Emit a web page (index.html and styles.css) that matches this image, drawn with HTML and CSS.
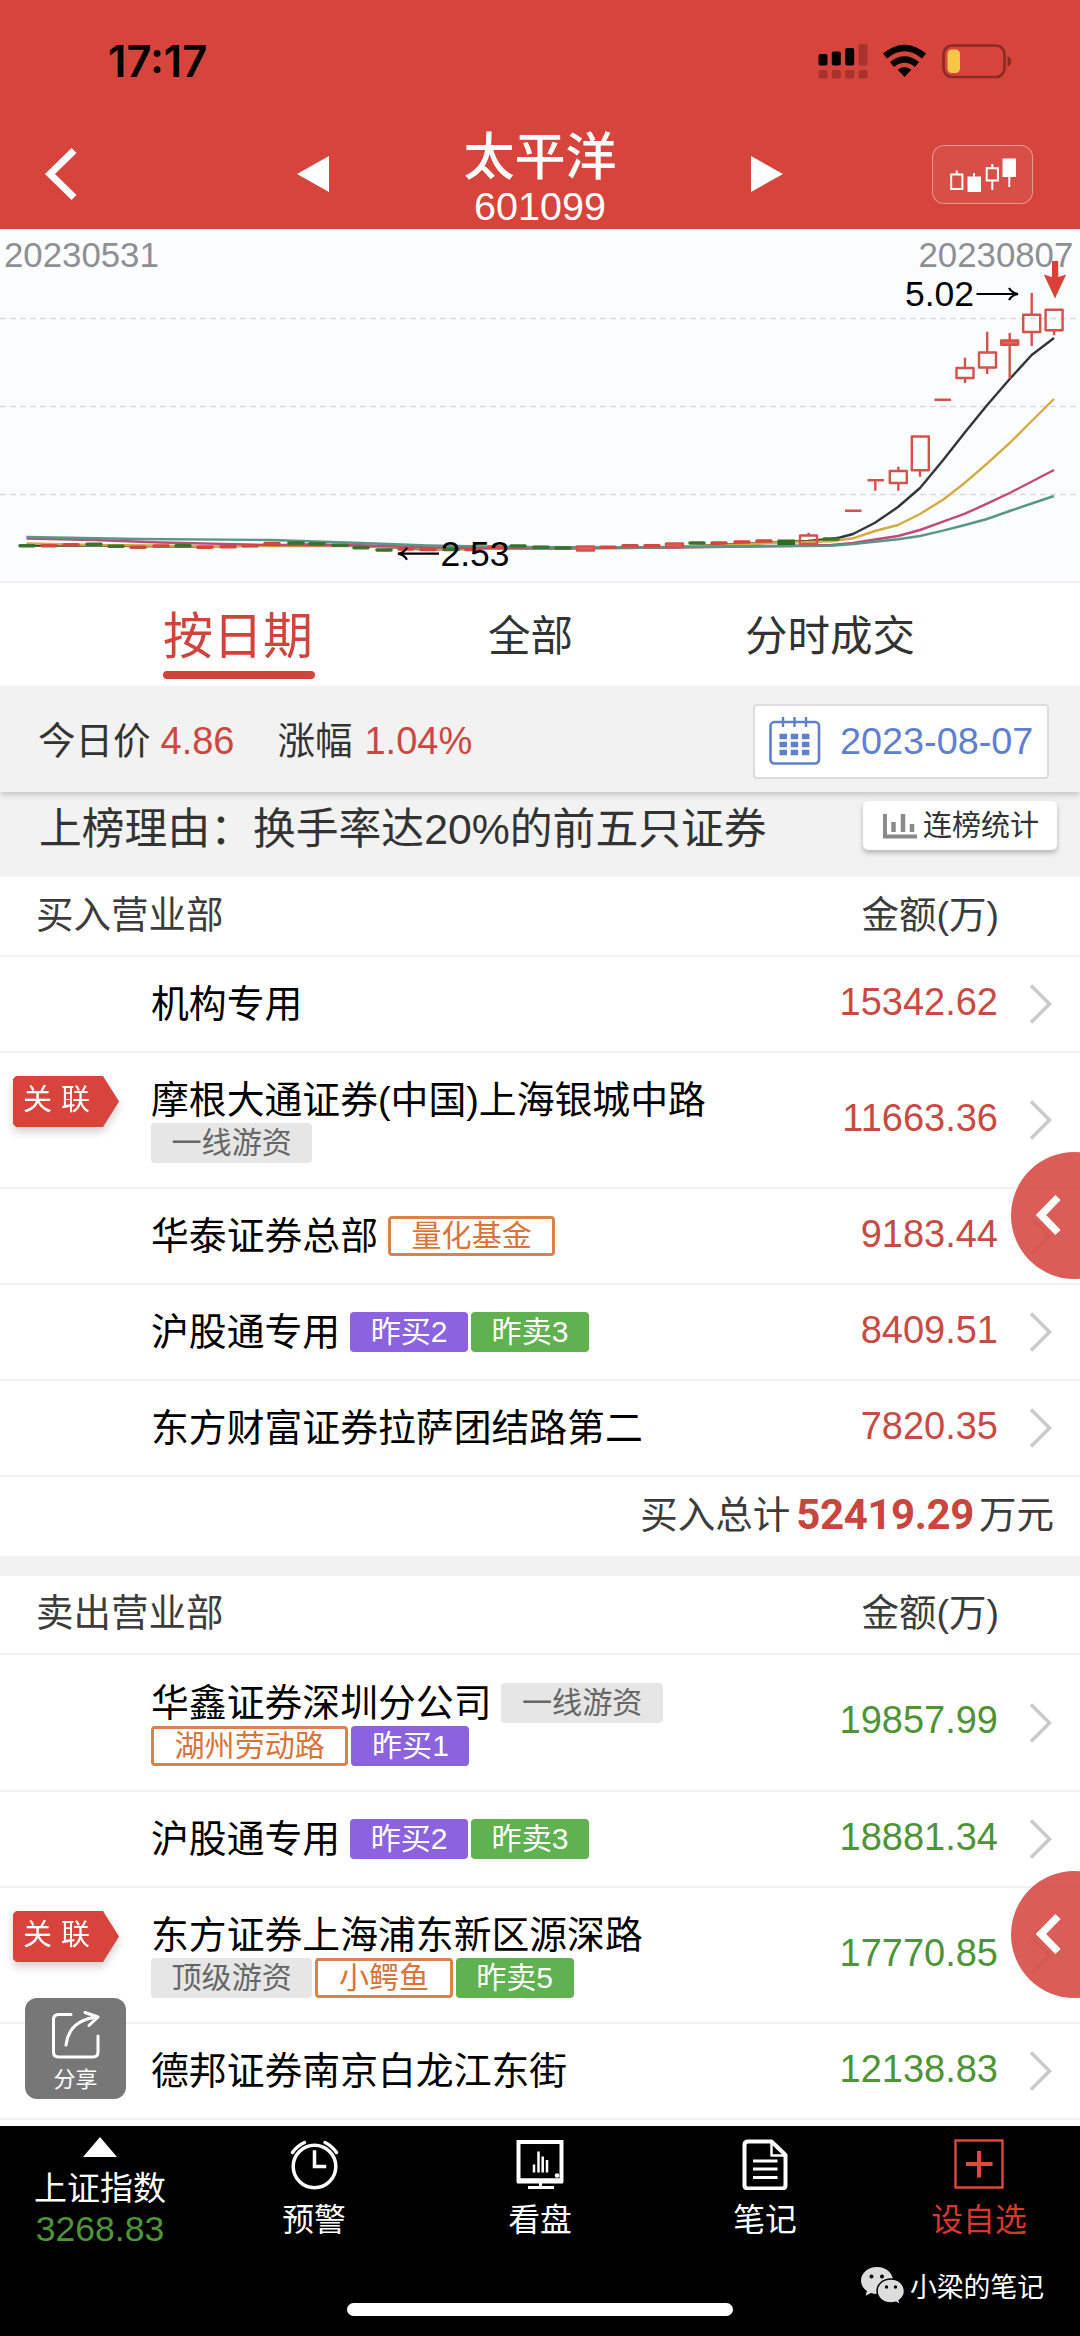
FILE: index.html
```html
<!DOCTYPE html>
<html lang="zh-CN">
<head>
<meta charset="utf-8">
<title>太平洋 601099</title>
<link rel="stylesheet" href="styles.css">
</head>
<body>
<div class="screen">
  <header class="header">
    <div class="status">
      <span class="clock">17:17</span>
      <svg class="status-icons" width="194" height="36" viewBox="818 43 194 36">
        <g fill="#000">
          <rect x="818.5" y="54" width="9" height="11.5" rx="2"/>
          <rect x="831.8" y="51.5" width="9" height="14" rx="2"/>
          <rect x="845.2" y="48" width="9" height="17.5" rx="2"/>
        </g>
        <g fill="#a8332e">
          <rect x="858.6" y="44" width="9" height="21.5" rx="2"/>
          <rect x="818.5" y="70" width="9" height="8.5" rx="2"/>
          <rect x="831.8" y="70" width="9" height="8.5" rx="2"/>
          <rect x="845.2" y="70" width="9" height="8.5" rx="2"/>
          <rect x="858.6" y="70" width="9" height="8.5" rx="2"/>
        </g>
        <g fill="none" stroke="#000" stroke-width="6.500">
          <path d="M885 56Q904.500 40 924 56"/>
          <path d="M892 64.500Q904.500 54.500 917 64.500"/>
        </g>
        <path d="M904.500 77l-6.800-7.200Q904.500 64 911.300 69.800z"/>
        <rect x="943.500" y="45.500" width="61" height="31.500" rx="8.500" fill="none" stroke="#8e2a25" stroke-width="2.600"/>
        <rect x="947.500" y="49.500" width="12.500" height="23.500" rx="4.500" fill="#f8c845"/>
        <path d="M1007.500 56q3.800 1.500 3.800 5.300t-3.800 5.300z" fill="#8e2a25"/>
      </svg>
    </div>
    <div class="titlebar">
      <svg class="back" width="36" height="54" viewBox="0 0 36 54"><path d="M32 3.500L8 27l24 23.500" fill="none" stroke="#fff" stroke-width="7"/></svg>
      <svg class="prev" width="34" height="38" viewBox="0 0 34 38"><path d="M33 1v36L1 19z" fill="#fff"/></svg>
      <div class="stock"><h1>太平洋</h1><p>601099</p></div>
      <svg class="next" width="34" height="38" viewBox="0 0 34 38"><path d="M1 1v36l32-18z" fill="#fff"/></svg>
      <div class="kline-btn">
        <svg width="68" height="36" viewBox="949 155 68 36">
          <path d="M951.200 172.500h11.200v14.500h-11.200zM956.800 168.500v4M986.700 166.200h11.200v12.300h-11.200zM992.300 162v4M992.300 178.500v9.500M974 171v4M1009.300 174v11" fill="none" stroke="#fff" stroke-width="2"/>
          <path d="M967.500 174.500h13.500V190h-13.500zM1002.500 156.500h13.500V175h-13.500z" fill="#fff"/>
        </svg>
      </div>
    </div>
  </header>

  <svg class="chart" width="1080" height="354" viewBox="0 229 1080 354">
    <path d="M0 318.500H1080M0 406.500H1080M0 494.500H1080" stroke="#d9d9dd" stroke-width="1.500" stroke-dasharray="6 4"/>
    <path d="M0 582.500H1080" stroke="#e8eaee" stroke-width="2"/>
    <g fill="#8e8f92" font-size="34.800">
      <text x="4" y="267">20230531</text>
      <text x="918.500" y="267">20230807</text>
    </g>
    <g fill="none" stroke-width="2.400" stroke-linejoin="round">
      <path stroke="#34343b" d="M26.500 545.500L94 545.500 183 546.500 272 545.500 317 544.500 384 547 428 549.500 518 548 585 548 675 547 742 544 786 542 808 541 831 539 840 537.500 853 534 875 522.700 898 507 920 488 943 460.300 965 432.300 987 405.300 1009.700 379 1031.700 355 1054 338"/>
      <path stroke="#d0ac43" d="M26.500 543.500L94 545 183 546 272 546 361 546 450 549.500 540 548 630 548 720 545.500 764 543.300 831 541.300 853 538.300 875 531 898 525 920 514 943 499.700 965 482.700 987 463.700 1009.700 443 1031.700 421 1054 399"/>
      <path stroke="#c04a7a" d="M26.500 538.500L94 540 161 542.500 272 545 361 545.300 450 548 540 548.500 675 547.500 786 546 831 545 853 543 875 539.500 898 536 920 530 943 521.700 965 513.700 987 503.700 1009.700 493 1054 470"/>
      <path stroke="#589787" d="M26.500 537L138 539 272 540 361 543 428 545.500 518 547 630 547.500 742 546.500 831 545.700 853 544 898 539.300 920 536 943 530.700 965 525 987 519 1009.700 511 1054 496"/>
    </g>
    <g fill="none" stroke-width="3.600" stroke-linecap="round">
      <path stroke="#3b722e" d="M20 545.700h14M87 544.300h14M109 546.300h14M176 545.700h14M289 543h14M310 543.700h14M333 545.300h14M354 547.700h14M377 550h14M444 549.500h14M511 546h14M534 547.300h14M556 548h14M690 543h14M824 539h14"/>
      <path stroke="#d4473f" d="M42 545.700h14M64 544.700h14M131 547.300h14M154 546h14M198 547.300h14M221 546.700h14M243 545.700h14M265 543.500h14M399 549h14M421 549.500h14M466 549.500h14M489 547h14M601 547.300h14M623 545.700h14M645 545.700h14M712 543h14M735 542h14M757 541h14"/>
    </g>
    <path d="M777.500 539.500h17.500v5.500h-17.500z" fill="#2f6b1f"/>
    <g fill="none" stroke="#d4524b" stroke-width="2.400" stroke-linejoin="round">
      <path fill="#e8645a" d="M577 546.500h17v4h-17zM666 543.500h17v3.500h-17zM1001.200 340.500h17v4.200h-17z"/>
      <path d="M800 535.500h17v8.500h-17zM808.600 532.700v2.800M845 510.700h16.500M867.500 480.300h16.500M875.300 480.300v10.400M889.800 471h17v12h-17zM898.300 466.700v4.300M898.300 483v7.700M911.800 436.500h17v33.800h-17zM920 470.300v6.400M934.500 399.700h16.500M956.500 368h17v10h-17zM965 357.700V368M965 378v5M979 352.500h17v15h-17zM987.200 331.700v20.800M987.200 367.500v6.500M1009.700 333v7.500M1009.700 344.700v33.800M1023.200 314.700h17V332h-17zM1031.700 293v21.700M1031.700 332v14M1045.600 309.700h17v20.600h-17zM1054.100 330.300v5"/>
    </g>
    <path d="M1052 261h6.200v16l8-2.500-11.200 24-11.200-24 8.200 2.500z" fill="#d8423a"/>
    <g fill="#000" font-size="35.500">
      <text x="905" y="306">5.02</text>
      <text x="440.500" y="565.700">2.53</text>
    </g>
    <path d="M976.500 294h40M1009 288q3 5 9 6-6 1-9 6M439 553.700h-40M407 547.700q-3 5-9 6 6 1 9 6" fill="none" stroke="#000" stroke-width="2.200"/>
  </svg>

  <nav class="tabs">
    <span class="tab active">按日期</span>
    <span class="tab">全部</span>
    <span class="tab">分时成交</span>
  </nav>

  <section class="quote">
    <span>今日价</span><b>4.86</b>
    <span class="gain">涨幅</span><b>1.04%</b>
    <div class="date">
      <svg width="52" height="50" viewBox="0 0 52 50">
        <rect x="1.500" y="6" width="48.500" height="41.500" rx="4" fill="none" stroke="#5f80cf" stroke-width="2.600"/>
        <path d="M14 1v10M25.500 1v10M37 1v10" stroke="#5f80cf" stroke-width="2.400"/>
        <path d="M10.500 20.500h30M10.500 28.500h30M10.500 36.500h30" stroke="#5f80cf" stroke-width="5.500" stroke-dasharray="7.500 3.700"/>
      </svg>
      <span>2023-08-07</span>
    </div>
  </section>

  <section class="reason">
    <h2>上榜理由：换手率达20%的前五只证券</h2>
    <div class="stat-btn">
      <svg width="34" height="26" viewBox="0 0 34 26"><path d="M2 1v22.500h32" fill="none" stroke="#8a8a8a" stroke-width="4"/><path d="M10.500 9v10M20 1v18M29 11v8" stroke="#8a8a8a" stroke-width="4.500"/></svg>
      <span>连榜统计</span>
    </div>
  </section>

  <section class="list buy">
    <div class="list-head"><span>买入营业部</span><span>金额(万)</span></div>
    <div class="row">
      <div class="name">机构专用</div>
      <div class="amount">15342.62</div>
      <svg class="more" width="23" height="40" viewBox="0 0 23 40"><path d="M2 1.500L20.500 20 2 38.500"/></svg>
    </div>
    <div class="row tall">
      <div class="linked"><span>关</span><span>联</span></div>
      <div class="name">摩根大通证券(中国)上海银城中路
        <div class="tags"><i class="tag gray">一线游资</i></div>
      </div>
      <div class="amount">11663.36</div>
      <svg class="more" width="23" height="40" viewBox="0 0 23 40"><path d="M2 1.500L20.500 20 2 38.500"/></svg>
    </div>
    <div class="row">
      <div class="name"><div class="line">华泰证券总部<i class="tag orange">量化基金</i></div></div>
      <div class="amount">9183.44</div>
      <svg class="more" width="23" height="40" viewBox="0 0 23 40"><path d="M2 1.500L20.500 20 2 38.500"/></svg>
    </div>
    <div class="row">
      <div class="name"><div class="line">沪股通专用<i class="tag purple">昨买2</i><i class="tag green">昨卖3</i></div></div>
      <div class="amount">8409.51</div>
      <svg class="more" width="23" height="40" viewBox="0 0 23 40"><path d="M2 1.500L20.500 20 2 38.500"/></svg>
    </div>
    <div class="row">
      <div class="name">东方财富证券拉萨团结路第二</div>
      <div class="amount">7820.35</div>
      <svg class="more" width="23" height="40" viewBox="0 0 23 40"><path d="M2 1.500L20.500 20 2 38.500"/></svg>
    </div>
    <div class="total"><span>买入总计</span><b>52419.29</b><span>万元</span></div>
  </section>

  <section class="list sell">
    <div class="list-head"><span>卖出营业部</span><span>金额(万)</span></div>
    <div class="row tall">
      <div class="name">
        <div class="line">华鑫证券深圳分公司<i class="tag gray">一线游资</i></div>
        <div class="tags"><i class="tag orange">湖州劳动路</i><i class="tag purple">昨买1</i></div>
      </div>
      <div class="amount">19857.99</div>
      <svg class="more" width="23" height="40" viewBox="0 0 23 40"><path d="M2 1.500L20.500 20 2 38.500"/></svg>
    </div>
    <div class="row">
      <div class="name"><div class="line">沪股通专用<i class="tag purple">昨买2</i><i class="tag green">昨卖3</i></div></div>
      <div class="amount">18881.34</div>
      <svg class="more" width="23" height="40" viewBox="0 0 23 40"><path d="M2 1.500L20.500 20 2 38.500"/></svg>
    </div>
    <div class="row tall">
      <div class="linked"><span>关</span><span>联</span></div>
      <div class="name">东方证券上海浦东新区源深路
        <div class="tags"><i class="tag gray">顶级游资</i><i class="tag orange">小鳄鱼</i><i class="tag green">昨卖5</i></div>
      </div>
      <div class="amount">17770.85</div>
      <svg class="more" width="23" height="40" viewBox="0 0 23 40"><path d="M2 1.500L20.500 20 2 38.500"/></svg>
    </div>
    <div class="row">
      <div class="name">德邦证券南京白龙江东街</div>
      <div class="amount">12138.83</div>
      <svg class="more" width="23" height="40" viewBox="0 0 23 40"><path d="M2 1.500L20.500 20 2 38.500"/></svg>
    </div>
  </section>

  <footer class="footer">
    <nav class="bottom-nav">
      <div class="index">
        <svg width="34" height="20" viewBox="0 0 34 20"><path d="M17 0l17 20H0z" fill="#fff"/></svg>
        <span>上证指数</span><em>3268.83</em>
      </div>
      <div class="item">
        <svg width="50" height="52" viewBox="0 0 50 52" fill="none" stroke="#fff" stroke-width="3.500" stroke-linecap="round"><circle cx="25.500" cy="28.500" r="21.300"/><path d="M25.500 14v14.500h10" stroke-linecap="square"/><path d="M3.500 14.500Q8 8 15.500 4.500M47.500 14.500Q43 8 36 4.500"/></svg>
        <span>预警</span>
      </div>
      <div class="item">
        <svg width="50" height="52" viewBox="0 0 50 52" fill="none" stroke="#fff"><path d="M3.500 4h43v38.500h-43z" stroke-width="4"/><path d="M2 43h46" stroke-width="5"/><path d="M25.500 44v6M13 49.500h26" stroke-width="3"/><path d="M19 26.500v8M23.500 13.500v21M27.700 18.500v16M32 22v12.500" stroke-width="2.500"/><circle cx="42" cy="37.500" r="2.300" fill="#fff" stroke="none"/></svg>
        <span>看盘</span>
      </div>
      <div class="item">
        <svg width="50" height="52" viewBox="0 0 50 52" fill="none" stroke="#fff" stroke-width="4" stroke-linejoin="round"><path d="M8 3.500h23.500L45.500 17v30q0 3.500-3.500 3.500H8q-3.500 0-3.500-3.500V7q0-3.500 3.500-3.500z"/><path d="M31.500 5v12.500h13" stroke-width="2.500"/><path d="M13 23h24.500M13 31h24.500M13 39.500h24.500" stroke-width="2.800"/></svg>
        <span>笔记</span>
      </div>
      <div class="item add">
        <svg width="50" height="52" viewBox="0 0 50 52" fill="none" stroke="#e0483f"><path d="M1.500 2.500h47v47h-47z" stroke-width="2.400"/><path d="M25 13v26.500M12 26h26.500" stroke-width="4"/></svg>
        <span>设自选</span>
      </div>
    </nav>
    <div class="home-bar"></div>
    <div class="credit">
      <svg width="44" height="38" viewBox="0 0 44 38"><path d="M16 0C7 0 0 6 0 13.500c0 4.500 2.400 8 6 10.500l-1.500 4.800 5.500-2.800q3 .9 6 .9C25 26.900 32 21 32 13.500S25 0 16 0z" fill="#ddd"/><path d="M30 12c-8 0-14 5.300-14 12s6 12 14 12q2.500 0 5-.8l4.500 2.600-1.300-4.300c3.400-2.400 5.300-5.600 5.300-9.500 0-6.700-6-12-13.500-12z" fill="#ddd" stroke="#000" stroke-width="1.500"/><g fill="#000"><circle cx="10.500" cy="9.500" r="2"/><circle cx="21" cy="9.500" r="2"/><circle cx="25.500" cy="20" r="1.700"/><circle cx="34.500" cy="20" r="1.700"/></g></svg>
      <span>小梁的笔记</span>
    </div>
  </footer>

  <div class="drawer upper"><svg width="30" height="42" viewBox="0 0 30 42"><path d="M25 3.500L8 21l17 17.500" fill="none" stroke="#fff" stroke-width="7.500"/></svg></div>
  <div class="drawer lower"><svg width="30" height="42" viewBox="0 0 30 42"><path d="M25 3.500L8 21l17 17.500" fill="none" stroke="#fff" stroke-width="7.500"/></svg></div>
  <div class="share">
    <svg width="50" height="50" viewBox="0 0 50 50" fill="none" stroke="#fff" stroke-width="3" stroke-linecap="round" stroke-linejoin="round"><path d="M20 4.500H7.500Q2.500 4.500 2.500 9.500v32.500q0 5 5 5h34.500q5 0 5-5V26"/><path d="M15 35Q18 10 46.500 7M34 2.500l13 4.500-9 8.500"/></svg>
    <span>分享</span>
  </div>
</div>
</body>
</html>
```
FILE: styles.css
```css
* { box-sizing: border-box; margin: 0; padding: 0; }
body {
  background: #fff;
  color: #000;
  font-family: "Liberation Sans", "Noto Sans CJK SC", sans-serif;
}
svg { display: block; flex: none; }
i, em { font-style: normal; }
.screen { position: relative; width: 1080px; height: 2336px; overflow: hidden; display: flex; flex-direction: column; }
.screen > * { flex: none; }

.header { height: 229px; background: #d6443c; color: #fff; }
.status { height: 122px; display: flex; justify-content: space-between; align-items: center; padding: 0 68px 0 108px; }
.clock { color: #000; font: 600 43.500px/50px Inter, sans-serif; }
.titlebar { height: 107px; display: grid; grid-template-columns: 296px 160px 168px 308px 148px; align-items: start; }
.back { margin: 25px 0 0 42px; }
.prev, .next { margin-top: 33px; }
.next { margin-left: 126px; }
.stock { text-align: center; }
.stock h1 { font-size: 51px; line-height: 58px; font-weight: 500; margin-top: 7px; }
.stock p { font-size: 39.500px; line-height: 40px; margin-top: -1px; }
.kline-btn { width: 101px; height: 59px; margin-top: 23px; border: 1.5px solid rgba(255,255,255,.4); border-radius: 12px; background: rgba(255,255,255,.06); display: flex; align-items: center; justify-content: center; }

.chart { background: #fbfcfe; }

.tabs { height: 103px; display: grid; grid-template-columns: 152px 84px 169px; justify-content: start; column-gap: 173px; padding: 5px 0 7px 163px; color: #333; font-size: 42.500px; line-height: 98px; white-space: nowrap; }
.tab.active { position: relative; color: #d0443c; font-size: 50px; height: 91px; }
.tab.active::after { content: ""; position: absolute; left: 0; right: 0; bottom: 0; height: 8px; border-radius: 4px; background: #d0443c; }

.quote { height: 106px; background: #f2f2f2; display: flex; align-items: center; padding: 4px 31px 0 38px; color: #333; font-size: 37.500px; line-height: 46px; position: relative; box-shadow: 0 3px 6px rgba(0,0,0,.18); }
.quote b { font-weight: 400; color: #cf4640; font-size: 38px; margin-left: 10px; }
.quote .gain { margin-left: 43px; }
.quote .gain + b { margin-left: 12px; }
.quote .date { margin-left: auto; width: 296px; height: 75px; background: #fff; border: 2px solid #dcdcdc; border-radius: 4px; display: flex; align-items: center; padding-left: 14px; gap: 19px; color: #5f80cf; font-size: 37.800px; }

.reason { height: 85px; background: #f2f2f2; display: flex; justify-content: space-between; padding: 9px 23px 0 39px; color: #333; }
.reason h2 { font-size: 42.800px; font-weight: 400; line-height: 56px; }
.stat-btn { width: 194px; height: 49px; background: #fff; border-radius: 5px; box-shadow: 0 3px 5px rgba(0,0,0,.25); display: flex; align-items: center; padding-left: 20px; gap: 6px; font-size: 29px; line-height: 46px; }

.list-head { height: 80px; border-bottom: 2px solid #f2f2f2; display: flex; justify-content: space-between; align-items: center; padding: 0 81px 2px 36px; color: #3c3c3c; font-size: 37.500px; line-height: 46px; }
.row { position: relative; height: 96px; border-bottom: 2px solid #f1f1f1; display: flex; align-items: center; padding: 0 28px 0 151px; }
.row.tall { height: 136px; }
.name { flex: 1; font-size: 37.850px; line-height: 46px; white-space: nowrap; }
.line, .tags { display: flex; align-items: center; gap: 3px; }
.line { line-height: 46px; }
.line .tag:first-of-type { margin-left: 7px; }
.tag { height: 40px; line-height: 39px; padding: 0 20.500px; border-radius: 4px; font-size: 30.100px; color: #fff; flex: none; }
.tag.gray { background: #e6e6e6; color: #666; }
.tag.orange { border: 3px solid #d8834c; color: #d8743a; line-height: 33px; background: #fff; }
.tag.purple { background: #8c62df; }
.tag.green { background: #60b14f; }
.amount { font-size: 38px; padding-bottom: 4px; margin-right: 31px; }
.buy .amount { color: #c84a43; }
.sell .amount { color: #4f9337; }
.more path { fill: none; stroke: #c9c9c9; stroke-width: 3.500; }
.linked { position: absolute; left: 13px; top: 23px; width: 106px; height: 51px; display: flex; gap: 9px; padding-left: 10px; color: #fff; font-size: 29px; line-height: 49px; filter: drop-shadow(0 5px 4px rgba(0,0,0,.18)); z-index: 0; }
.linked::before { content: ""; position: absolute; inset: 0; z-index: -1; background: #d8443c; clip-path: polygon(3px 0, 90px 0, 106px 50%, 90px 100%, 3px 100%, 0 48px, 0 3px); }
.total { height: 78.500px; display: flex; align-items: center; justify-content: flex-end; padding: 0 26px 2px 0; color: #3c3c3c; font-size: 37.500px; line-height: 46px; }
.total b { font: 700 42px/50px Roboto, sans-serif; color: #c8463e; margin: 0 5px 0 6px; letter-spacing: -.4px; }
.sell { border-top: 20px solid #f2f2f2; }
.sell .list-head { height: 79.500px; }
.sell .list-head + .tall { height: 137px; }

.footer { position: absolute; left: 0; right: 0; top: 2126px; height: 210px; background: #000; color: #fff; }
.bottom-nav { display: grid; grid-template-columns: 200px 228px 224px 226px 202px; height: 177px; }
.item, .index { display: flex; flex-direction: column; align-items: center; }
.item { padding-top: 12px; font-size: 31.800px; line-height: 40px; }
.item span { margin-top: 10px; }
.add { color: #d9372d; }
.index { padding-top: 11px; font-size: 33px; line-height: 40px; }
.index span { margin-top: 12px; }
.index em { color: #4c9539; font-size: 35.500px; margin-top: 0; }
.home-bar { width: 386px; height: 13px; margin: 0 auto; border-radius: 7px; background: #fff; }
.credit { position: absolute; left: 861px; top: 141px; display: flex; gap: 5px; font-size: 26.800px; line-height: 42px; }

.drawer { position: absolute; left: 1011px; width: 127px; height: 127px; border-radius: 50%; background: rgba(214,76,69,.9); padding: 42px 0 0 22px; }
.upper { top: 1152px; }
.lower { top: 1871px; }
.share { position: absolute; left: 25px; top: 1998px; width: 101px; height: 101px; border-radius: 12px; background: rgba(100,100,100,.88); color: #fff; display: flex; flex-direction: column; align-items: center; padding-top: 12px; font-size: 22px; line-height: 30px; }
.share span { margin-top: 5px; }
```
